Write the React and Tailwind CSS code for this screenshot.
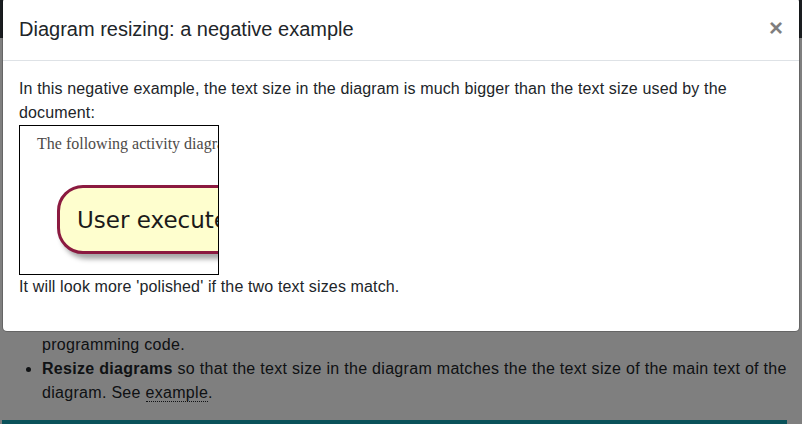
export default function App() {
  return (
    <div className="relative h-[424px] w-[802px] overflow-hidden bg-white font-['Liberation_Sans',Arial,sans-serif] text-[#212529]">
      {/* Page behind the modal */}
      <div className="flex h-full flex-col">
        <div className="h-[38px] bg-[#343a40]" />
        <div className="flex-1" />
        <ul className="mb-[15px] list-disc pl-[42px] pr-[12px] text-[16px] leading-6 tracking-[0.3px]">
          <li>
            Use a monospaced font for anything that is code, or that has been copied from
            <br />
            programming code.
          </li>
          <li>
            <strong className="font-bold">Resize diagrams</strong> so that the text size in the diagram matches the the
            text size of the main text of the diagram. See{" "}
            <a href="#" className="border-b border-dotted border-[#212529]">example</a>.
          </li>
        </ul>
        <div className="ml-[2px] h-[4px] w-[785px] shrink-0 bg-[#15a5b5]" />
      </div>

      {/* Backdrop */}
      <div className="absolute inset-0 bg-black/50" />

      {/* Modal */}
      <div className="absolute left-[2px] top-[-3px] w-[798px] rounded-[5px] border border-black/20 bg-white bg-clip-padding">
        <div className="flex items-start justify-between border-b border-[#dee2e6] p-4">
          <h5 className="text-[20px] font-medium leading-[30px] text-[#212529]">Diagram resizing: a negative example</h5>
          <button className="-m-4 ml-auto px-4 pb-4 pt-[18px] text-[24px] font-bold leading-none text-black opacity-50">×</button>
        </div>
        <div className="p-4">
          <p className="mb-4 text-[16px] leading-6 tracking-[0.14px]">
            In this negative example, the text size in the diagram is much bigger than the text size used by the
            document:
            <span className="block h-[150px] w-[200px] overflow-hidden border border-black bg-white tracking-normal">
              <span className="block whitespace-nowrap pl-[17px] pt-[8px] font-['Liberation_Serif',serif] text-[16px] leading-5 text-[#4d4a48]">
                The following activity diagram
              </span>
              <span className="ml-[37px] mt-[31px] flex h-[69px] w-[260px] items-center whitespace-nowrap rounded-[26px] border-[3px] border-[#8b1a40] bg-[#fefece] pl-[17px] font-['DejaVu_Sans',sans-serif] text-[23px] text-[#1a1a1a] shadow-[4px_5px_5px_rgba(0,0,0,0.35)]">
                User executes
              </span>
            </span>
            It will look more 'polished' if the two text sizes match.
          </p>
        </div>
      </div>
    </div>
  );
}
